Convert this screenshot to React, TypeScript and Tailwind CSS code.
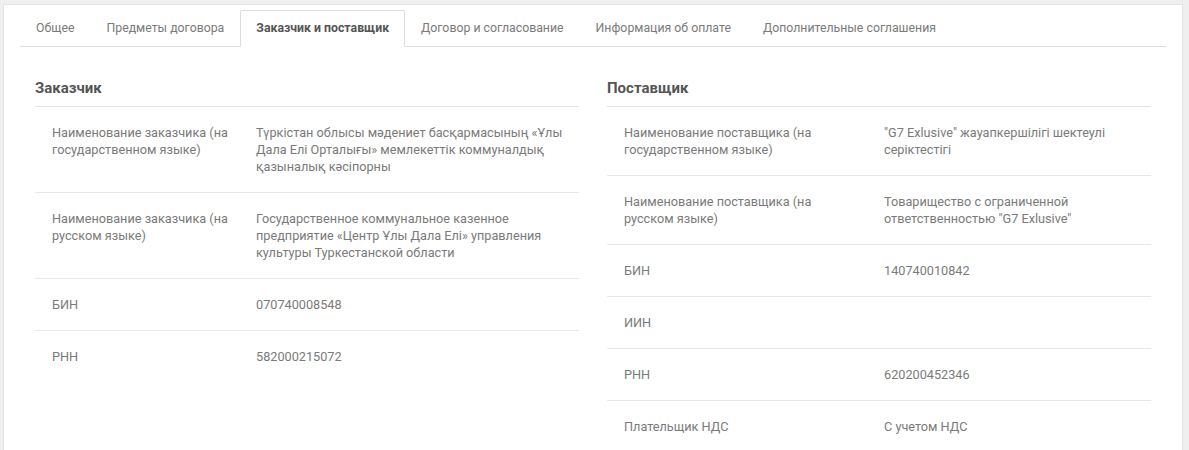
const tabs = [
  "Общее",
  "Предметы договора",
  "Заказчик и поставщик",
  "Договор и согласование",
  "Информация об оплате",
  "Дополнительные соглашения",
];

type Row = { label: string[]; value: string[] };

const customer: Row[] = [
  {
    label: ["Наименование заказчика (на", "государственном языке)"],
    value: [
      "Түркістан облысы мәдениет басқармасының «Ұлы",
      "Дала Елі Орталығы» мемлекеттік коммуналдық",
      "қазыналық кәсіпорны",
    ],
  },
  {
    label: ["Наименование заказчика (на", "русском языке)"],
    value: [
      "Государственное коммунальное казенное",
      "предприятие «Центр Ұлы Дала Елі» управления",
      "культуры Туркестанской области",
    ],
  },
  { label: ["БИН"], value: ["070740008548"] },
  { label: ["РНН"], value: ["582000215072"] },
];

const supplier: Row[] = [
  {
    label: ["Наименование поставщика (на", "государственном языке)"],
    value: ['"G7 Exlusive" жауапкершілігі шектеулі', "серіктестігі"],
  },
  {
    label: ["Наименование поставщика (на", "русском языке)"],
    value: ["Товарищество с ограниченной", 'ответственностью "G7 Exlusive"'],
  },
  { label: ["БИН"], value: ["140740010842"] },
  { label: ["ИИН"], value: [] },
  { label: ["РНН"], value: ["620200452346"] },
  { label: ["Плательщик НДС"], value: ["С учетом НДС"] },
];

function Lines({ lines }: { lines: string[] }) {
  return (
    <>
      {lines.map((line, i) => (
        <span key={i} className="block whitespace-nowrap">
          {line}
        </span>
      ))}
    </>
  );
}

function InfoTable({ title, rows, labelWidth }: { title: string; rows: Row[]; labelWidth: "left" | "right" }) {
  return (
    <div>
      <h3 className="border-b border-[#e3e3e3] pb-[8px] text-[15px] font-bold leading-[20px] text-[#555]">{title}</h3>
      {rows.map((row, idx) => (
        <div
          key={idx}
          className={`flex py-[17px] text-[12.7px] leading-[17px] ${idx < rows.length - 1 ? "border-b border-[#e8e8e8]" : ""}`}
        >
          <div className={`shrink-0 pl-[17px] ${labelWidth === "left" ? "w-[221px]" : "w-[277px]"}`}>
            <Lines lines={row.label} />
          </div>
          <div className="flex-1">
            <Lines lines={row.value} />
          </div>
        </div>
      ))}
    </div>
  );
}

export default function App() {
  return (
    <div
      className="h-[450px] overflow-hidden bg-[#efefef] pl-[3px] pr-[6px] pt-[4px] text-[#7a7a7a]"
      style={{ fontFamily: "Roboto, 'Liberation Sans', Arial, sans-serif" }}
    >
      <div className="h-full border-l border-r border-t border-[#e4e4e4] bg-white px-[16px] pt-[5px]">
        <div className="flex border-b border-[#dddddd] text-[12.3px]">
          {tabs.map((tab) =>
            tab === "Заказчик и поставщик" ? (
              <div
                key={tab}
                className="-mb-px flex h-[37px] items-center rounded-t-[2px] border border-[#dddddd] border-b-white bg-white px-[15px] font-bold text-[#555]"
              >
                {tab}
              </div>
            ) : (
              <div key={tab} className="flex h-[36px] items-center px-[16px]">
                {tab}
              </div>
            )
          )}
        </div>

        <div className="mt-[31px] grid grid-cols-2 gap-[28px] px-[15px]">
          <InfoTable title="Заказчик" rows={customer} labelWidth="left" />
          <InfoTable title="Поставщик" rows={supplier} labelWidth="right" />
        </div>
      </div>
    </div>
  );
}
